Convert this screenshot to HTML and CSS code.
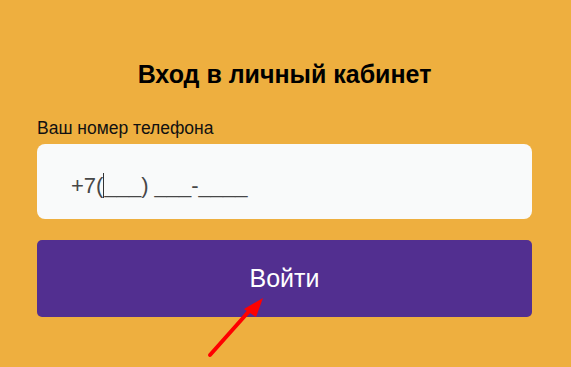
FILE: index.html
```html
<!DOCTYPE html>
<html lang="ru">
<head>
    <meta charset="UTF-8">
    <link rel="stylesheet" href="styles.css">
</head>
<body>
    <form class="login-form">
        <h1 class="login-title">Вход в личный кабинет</h1>
        <label class="login-label">Ваш номер телефона</label>
        <div class="phone-field">+7(<span class="caret"></span>___) ___-____</div>
        <button type="button" class="login-button">Войти</button>
    </form>

    <svg class="hint-arrow" width="571" height="367" viewBox="0 0 571 367">
        <line x1="210" y1="355" x2="251" y2="309" stroke="#ff0000" stroke-width="4" stroke-linecap="round"/>
        <polygon points="263,298 244,309 256,317" fill="#ff0000"/>
    </svg>
</body>
</html>
```

FILE: styles.css
```css
body {
    margin: 0;
    height: 367px;
    background-color: #eeaf3f;
    font-family: "Liberation Sans", Arial, sans-serif;
    overflow: hidden;
}

.login-form {
    width: 495px;
    margin-left: 37px;
    padding-top: 60px;
    display: flex;
    flex-direction: column;
}

.login-title {
    margin: 0;
    font-size: 25px;
    line-height: 28px;
    font-weight: bold;
    text-align: center;
    color: #000;
}

.login-label {
    margin-top: 31px;
    font-size: 17.5px;
    line-height: 19px;
    color: #111;
}

.phone-field {
    margin-top: 6px;
    height: 75px;
    box-sizing: border-box;
    padding: 29px 0 0 34px;
    background-color: #f9fafa;
    border-radius: 8px;
    font-size: 22px;
    line-height: 24px;
    color: #474747;
}

.caret {
    display: inline-block;
    width: 1px;
    height: 25px;
    margin-bottom: -5px;
    background-color: #333;
}

.login-button {
    margin-top: 21px;
    height: 77px;
    border: none;
    border-radius: 5px;
    background-color: #522f90;
    color: #fff;
    font-family: "Liberation Sans", Arial, sans-serif;
    font-size: 25px;
    cursor: pointer;
}

.hint-arrow {
    position: absolute;
    top: 0;
    left: 0;
    pointer-events: none;
}
```
